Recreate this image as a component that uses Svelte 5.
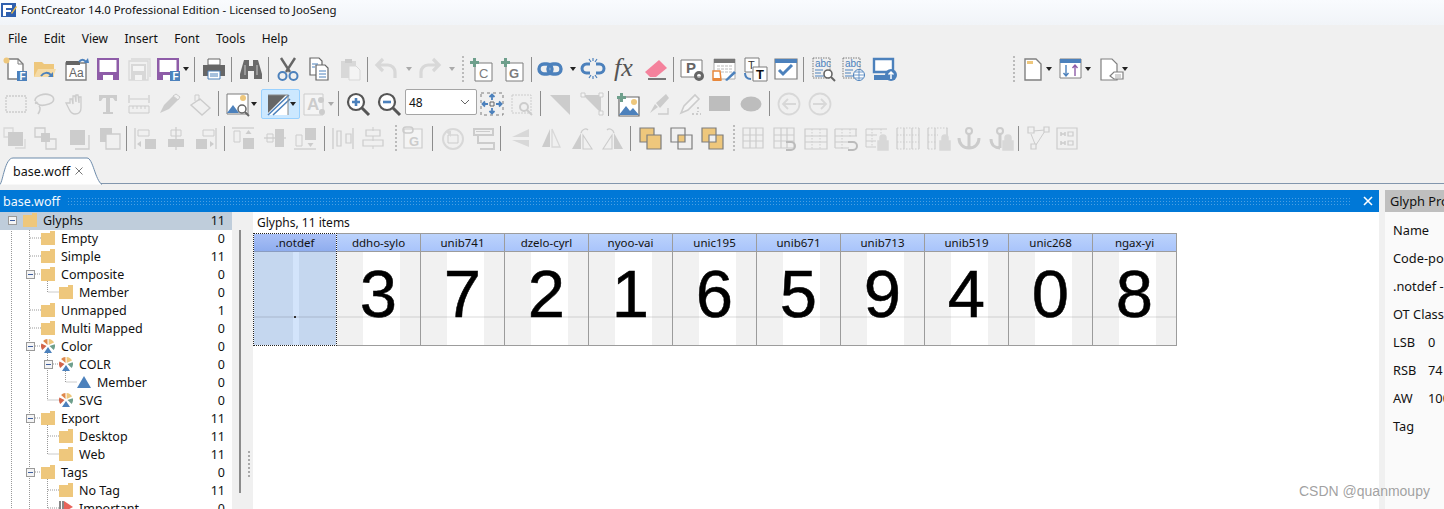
<script lang="ts">
  const g = '#cccccc', b = '#4c81bc', d = '#7d7d7d', p = '#8e5ca8', y = '#eec77c', m = '#6e9f8c', lg = '#d8d8d8';
  const label = (x, yy, t, c = d, s = 11, w = 700, f = 'Liberation Sans') =>
    `<text x="${x}" y="${yy}" fill="${c}" font-size="${s}" font-weight="${w}" font-family="${f}">${t}</text>`;
  const sheet = (c = d, f = '#fff') => `<path d="M5 2h10l5 5v15H5z" fill="${f}" stroke="${c}" stroke-width="1.4"/><path d="M15 2v5h5" fill="none" stroke="${c}"/>`;
  const floppy = (c) => `<path d="M1 1h22v22H1z" fill="${c}"/><path d="M3.500 3h17v12h-17z" fill="#fff"/><path d="M7 18h10v5H7z" fill="#fff"/>`;
  const fTag = `<rect x="14" y="14" width="10" height="10" fill="${b}"/>` + label(16.5, 23, 'F', '#fff', 10);
  const plus = `<path d="M4 1h3v3h3v3H7v3H4V7H1V4h3z" fill="${m}"/>`;
  const lock = `<path d="M13 24V15h10v9zM15 15v-3a3 3 0 0 1 6 0v3" fill="${lg}" stroke="${lg}" stroke-width="1.5"/>`;
  const grid = (c = g, dash = '') => `<path d="M2 2h20v20H2zM9 2v20M15 2v20M2 9h20M2 15h20" fill="none" stroke="${c}" stroke-width="1.2" stroke-dasharray="${dash}"/>`;
  const hook = `<path d="M14 16h5a4 4 0 0 1 0 8h-5" fill="none" stroke="#bbb" stroke-width="2"/>`;
  const abc = label(4, 10, 'abc', b, 10, 400) + `<path d="M2 1h17v20H2z" fill="none" stroke="${d}" stroke-dasharray="1.5 1"/><path d="M4 13h8M4 16h6M4 19h10" stroke="${b}"/>`;
  const icons = {
    newfont: sheet() + `<circle cx="3.5" cy="3.5" r="3" fill="${y}"/>` + fTag,
    open: `<path d="M1 20V5h8l2 2h10v13z" fill="${y}"/><path d="M1 20l4-8h18l-3 8z" fill="#f5dba6"/><path d="M8 19c3-4 7-4 10-1" fill="none" stroke="${b}" stroke-width="2"/><path d="M15 20l5 0 0-5z" fill="${b}"/>`,
    aa: `<path d="M1 6h20v17H1z" fill="#fff" stroke="${d}" stroke-width="1.4"/><path d="M1 4h14v4H1z" fill="#666"/>` + label(4, 20, 'Aa', '#666', 12, 400) + `<path d="M14 5c2-3 5-3 7 0" fill="none" stroke="${b}" stroke-width="2"/><path d="M19 6h5l-1-5z" fill="${b}"/>`,
    save: floppy(p),
    saveall: `<path d="M4 2h19v18M2 4h19v19H2z" fill="none" stroke="${lg}" stroke-width="1.3"/><path d="M4 7h15v16H4z" fill="${lg}"/><path d="M6 9h11v5H6zM8 18h7v5H8z" fill="#f4f4f4"/>`,
    saveas: floppy(p) + fTag,
    print: `<path d="M6 2h12v6H6z" fill="#fff" stroke="#666"/><path d="M1 8h22v11H1z" fill="#666"/><path d="M6 14h12v8H6z" fill="#fff" stroke="${b}"/><path d="M8 17h8M8 19h8" stroke="${b}"/>`,
    binoc: `<path d="M5 3h5v6h4V3h5l4 14v5h-8v-8h-6v8H1v-5z" fill="#6a6a6a"/><path d="M6 8v10M18 8v10" stroke="#c8c8c8"/>`,
    cut: `<path d="M5 1l9 14M19 1L10 15" stroke="#666" stroke-width="2.4"/><circle cx="6.5" cy="19" r="4" fill="none" stroke="${b}" stroke-width="2"/><circle cx="17.5" cy="19" r="4" fill="none" stroke="${b}" stroke-width="2"/>`,
    copy: `<path d="M3 1h9l3 3v14H3z" fill="#fff" stroke="#666" stroke-width="1.2"/><path d="M9 8h9l3 3v12H9z" fill="#fff" stroke="#666" stroke-width="1.2"/><path d="M5 7h6M5 10h3M12 14h7M12 17h7M12 20h7" stroke="${b}"/>`,
    paste: `<path d="M3 4h15v17H3z" fill="${lg}"/><path d="M7 2h7v4H7z" fill="${g}"/><path d="M11 9h7l4 4v10H11z" fill="#f4f4f4" stroke="${lg}"/>`,
    undo: `<path d="M8 2L2 8l6 6M3 8h10a7 7 0 0 1 7 7v6" fill="none" stroke="${lg}" stroke-width="3.200"/>`,
    redo: `<path d="M16 2l6 6-6 6M21 8H11a7 7 0 0 0-7 7v6" fill="none" stroke="${lg}" stroke-width="3.200"/>`,
    addc: `<path d="M6 6h17v18H6z" fill="#fff" stroke="${d}"/>` + label(10, 21, 'C', d, 13, 400) + plus,
    addg: `<path d="M6 6h17v18H6z" fill="#fff" stroke="${d}"/>` + label(9, 21, 'G', d, 13, 700) + plus,
    link: `<rect x="1" y="7" width="13" height="10" rx="5" fill="none" stroke="${b}" stroke-width="3.400"/><rect x="10" y="7" width="13" height="10" rx="5" fill="none" stroke="${b}" stroke-width="3.400"/>`,
    unlink: `<path d="M9 7H5.500a4.500 4.500 0 0 0 0 9H9M15 7h3.500a4.500 4.500 0 0 1 0 9H15" fill="none" stroke="${b}" stroke-width="3"/><path d="M8 2l2 3M16 2l-2 3M12 1v3M8 21l2-3M16 21l-2-3M12 22v-3" stroke="${b}" stroke-width="1.2"/>`,
    fx: label(1, 19, 'fx', '#555', 26, 400, 'Liberation Serif').replace('<text', '<text font-style="italic"'),
    eraser: `<path d="M1 15L15 3l8 8-11 9H6z" fill="#f4829c"/><path d="M4 22h18" stroke="#777" stroke-width="2"/>`,
    prop: `<path d="M1 3h21v17H1z" fill="#fff" stroke="${d}"/>` + label(6, 16, 'P', '#666', 15) + `<circle cx="19" cy="19" r="3.500" fill="none" stroke="#666" stroke-width="3"/>`,
    tedit: `<path d="M2 2h21v20H2z" fill="#fff" stroke="#aaa"/><path d="M2 2h21v4H2z" fill="#777"/><path d="M5 9h16M5 12h16M5 15h16" stroke="#bbb" stroke-dasharray="3 1"/><path d="M1 14h7l1 9H1z" fill="#fff" stroke="#e8883c" stroke-width="1.5"/><path d="M1 21h8v3H1z" fill="#e8883c"/><path d="M13 23l9-9 2 2-9 8z" fill="${b}"/>`,
    tt: `<path d="M2 1h14v14H2z" fill="#fff" stroke="${d}"/>` + label(5, 12, 'T', '#333', 11, 400) + `<path d="M10 10h14v14H10z" fill="#fff" stroke="${d}"/>` + label(13, 22, 'T', '#111', 13) + `<path d="M2 16c0 4 2 6 6 6" fill="none" stroke="${b}" stroke-width="2"/>`,
    check: `<path d="M1 2h22v20H1z" fill="#fff" stroke="${d}" stroke-width="1.2"/><path d="M1 2h22v4H1z" fill="${b}"/><path d="M5 13l4 4 9-9" fill="none" stroke="${b}" stroke-width="3"/>`,
    abcs: abc + `<circle cx="17" cy="17" r="4" fill="#fff" stroke="#666" stroke-width="1.6"/><path d="M20 20l4 4" stroke="#666" stroke-width="2"/>`,
    abcw: abc + `<circle cx="18" cy="18" r="5.500" fill="#fff" stroke="${b}"/><path d="M12.500 18h11M18 12.500v11M14 15h8M14 21h8" stroke="${b}" stroke-width=".8"/>`,
    monitor: `<path d="M1 2h19v13H1z" fill="#fff" stroke="${b}" stroke-width="2.400"/><path d="M1 18h14v5H1z" fill="${b}"/><circle cx="18" cy="18" r="6" fill="${b}"/><path d="M18 22v-7M15.500 17.500l2.500-2.500 2.500 2.500" fill="none" stroke="#fff" stroke-width="1.500"/>`,
    doc: `<path d="M4 2h11l5 5v16H4z" fill="#fff" stroke="#808080" stroke-width="1.400"/><path d="M6 4h6v3H6z" fill="${y}"/>`,
    sort: `<path d="M1 2h21v19H1z" fill="#fff" stroke="#808080"/><path d="M1 2h21v4H1z" fill="${b}"/><path d="M7 8v11M4.500 16l2.500 3 2.500-3" fill="none" stroke="${b}" stroke-width="1.400"/><path d="M16 19V8M13.500 11l2.500-3 2.500 3" fill="none" stroke="${p}" stroke-width="1.400"/>`,
    tagdoc: `<path d="M3 2h11l5 5v16H3z" fill="#fff" stroke="#808080" stroke-width="1.200"/><path d="M12 19l4-4h9v7h-9z" fill="#fff" stroke="#808080" stroke-width="1.200"/><path d="M17 18h6M17 20h6" stroke="#aaa"/>`,

    marquee: `<path d="M2 4h20v16H2z" fill="none" stroke="${g}" stroke-width="1.400" stroke-dasharray="2 1"/>`,
    lasso: `<path d="M2 9c0-6 10-8 15-6s5 7-1 9-9 2-11 0c-2-3-3-2-2 0M6 14c2 2 1 5-1 8" fill="none" stroke="${g}" stroke-width="1.600"/>`,
    hand: `<path d="M5 11V7l2 0 1 5V4h2l1 6V3h2l1 8V5h2v11c0 4-2 6-6 6s-5-3-6-5l-3-6z" fill="#f0f0f0" stroke="${g}" stroke-width="1.300"/>`,
    tee: `<path d="M3 3h18v6h-2l-2-3h-3v14h3v2H7v-2h3V6H7L5 9H3z" fill="${g}"/>`,
    ruler: `<path d="M2 3v8M22 3v8M3 7h18" fill="none" stroke="${g}" stroke-width="1.200"/><path d="M2 14h20v7H2zM6 14v3M10 14v3M14 14v3M18 14v3" fill="none" stroke="${g}"/>`,
    knife: `<path d="M2 21l4-8 9-9 5 4-9 9z" fill="${g}"/><path d="M15 4l3-2 4 3-2 3z" fill="none" stroke="${g}"/>`,
    bucket: `<path d="M11 7l10 9-8 7L2 13z" fill="#f0f0f0" stroke="${g}" stroke-width="1.400"/><path d="M6 9V3h4v6" fill="none" stroke="${g}"/>`,
    imgzoom: `<path d="M1 2h21v20H1z" fill="#fff" stroke="${d}"/><circle cx="17" cy="6" r="3" fill="${y}"/><path d="M1 21l6-8 6 8z" fill="${b}"/><circle cx="16" cy="17" r="4" fill="#fff" stroke="#666" stroke-width="1.500"/><path d="M19 20l4 4" stroke="#666" stroke-width="2"/>`,
    split: `<path d="M2 3h20v20H2z" fill="#fff"/><path d="M2 3h18L2 21z" fill="#666"/><path d="M2 23L23 3M7 23L24 7" stroke="${b}" stroke-width="1.600"/><path d="M2 3h20v20" fill="none" stroke="#888"/>`,
    acolor: `<path d="M1 2h19v21H1z" fill="#f4f4f4" stroke="${g}"/>` + label(4, 18, 'A', g, 17) + `<circle cx="18" cy="8" r="3" fill="${g}"/><circle cx="19" cy="20" r="3" fill="${g}"/>`,
    zoomin: `<circle cx="10" cy="10" r="8" fill="#fff" stroke="#555" stroke-width="2.200"/><path d="M16 16l7 7" stroke="#555" stroke-width="3"/><path d="M6 10h8M10 6v8" stroke="${b}" stroke-width="2.600"/>`,
    zoomout: `<circle cx="10" cy="10" r="8" fill="#fff" stroke="#555" stroke-width="2.200"/><path d="M16 16l7 7" stroke="#555" stroke-width="3"/><path d="M6 10h8" stroke="${b}" stroke-width="2.600"/>`,
    fit: `<path d="M1 1h22v22H1z" fill="none" stroke="${d}" stroke-dasharray="3 3"/><path d="M10 10h4v4h-4z" fill="none" stroke="#666"/><path d="M12 8V3M9.500 5L12 2.500 14.500 5M12 16v5M9.500 19l2.500 2.500 2.500-2.500M8 12H3M5 9.500L2.500 12 5 14.500M16 12h5M19 9.500l2.500 2.500-2.500 2.500" fill="none" stroke="${b}" stroke-width="1.800"/>`,
    zoomsel: `<path d="M2 3h19v18H2z" fill="none" stroke="${g}" stroke-dasharray="2 1"/><circle cx="14" cy="15" r="4" fill="#f0f0f0" stroke="${g}" stroke-width="2"/><path d="M17 18l5 5" stroke="${g}" stroke-width="2"/>`,
    tri: `<path d="M2 3h20v20z" fill="${g}"/>`,
    trin: `<path d="M3 3h18v18z" fill="${g}"/><path d="M1 1h4v4H1zM19 1h4v4h-4zM19 19h4v4h-4z" fill="#f4f4f4" stroke="${g}"/>`,
    addimg: `<path d="M3 5h20v19H3z" fill="#fff" stroke="#666" stroke-width="1.200"/><circle cx="18" cy="10" r="3" fill="${y}"/><path d="M3 23l7-9 4 5 3-3 6 7z" fill="${b}"/>` + plus,
    brush: `<path d="M3 21l5-9 3 3zM9 11l10-9 3 4-9 10z" fill="${g}"/><path d="M11 22h10v-6" fill="none" stroke="${g}" stroke-width="1.400"/>`,
    pen: `<path d="M3 21l3-7L17 3l4 4-11 11z" fill="#f4f4f4" stroke="${g}" stroke-width="1.600"/><path d="M14 22h9M20 15v5" stroke="${g}" stroke-width="2" stroke-dasharray="2 2"/>`,
    rect: `<path d="M1 4h21v15H1z" fill="#bdbdbd"/>`,
    ellipse: `<ellipse cx="12" cy="12" rx="10.500" ry="7.500" fill="#bdbdbd"/>`,
    back: `<circle cx="12" cy="12" r="10.500" fill="none" stroke="${lg}" stroke-width="1.800"/><path d="M19 12H6M11 7l-5 5 5 5" fill="none" stroke="${lg}" stroke-width="1.800"/>`,
    fwd: `<circle cx="12" cy="12" r="10.500" fill="none" stroke="${lg}" stroke-width="1.800"/><path d="M5 12h13M13 7l5 5-5 5" fill="none" stroke="${lg}" stroke-width="1.800"/>`,

    front: `<path d="M1 2h9v9H1z" fill="none" stroke="${lg}" stroke-width="1.300"/><path d="M5 6h15v14H5z" fill="${g}"/><path d="M12 22h10v-9" fill="none" stroke="${lg}" stroke-width="1.300"/>`,
    fwd2: `<path d="M2 2h10v9H2zM13 13h10v10H13z" fill="none" stroke="${g}" stroke-width="1.300"/><path d="M8 7h9v9H8z" fill="${g}"/>`,
    backw: `<path d="M3 4h15v15H3z" fill="${g}"/><path d="M8 23h14V9" fill="none" stroke="${g}" stroke-width="1.300"/>`,
    back2: `<path d="M2 2h12v14H2z" fill="${g}"/><path d="M8 8h14v15H8z" fill="#f0f0f0" stroke="${g}" stroke-width="1.300"/>`,
    al1: `<path d="M2 2v21" stroke="${g}" stroke-width="1.300"/><path d="M5 4h11v6H5z" fill="none" stroke="${g}"/><path d="M12 13h11v10H12z" fill="${g}"/><path d="M4 18l4-3v6z" fill="${g}"/>`,
    al2: `<path d="M12 1v23" stroke="${g}" stroke-width="1.300"/><path d="M7 4h10v6H7z" fill="none" stroke="${g}"/><path d="M4 13h16v8H4z" fill="${g}"/>`,
    al3: `<path d="M22 2v21" stroke="${g}" stroke-width="1.300"/><path d="M9 4h11v6H9z" fill="none" stroke="${g}"/><path d="M2 13h11v10H2z" fill="${g}"/><path d="M20 18l-4-3v6z" fill="${g}"/>`,
    at1: `<path d="M1 2h22" stroke="${g}" stroke-width="1.300"/><path d="M3 5h6v11H3z" fill="none" stroke="${g}"/><path d="M12 12h11v11H12z" fill="${g}"/><path d="M17.500 4l-3 4h6z" fill="${g}"/>`,
    at2: `<path d="M1 12h22" stroke="${g}" stroke-width="1.300"/><path d="M4 8h6v8H4z" fill="none" stroke="${g}"/><path d="M12 3h9v18h-9z" fill="${g}"/>`,
    at3: `<path d="M1 23h22" stroke="${g}" stroke-width="1.300"/><path d="M3 9h6v11H3z" fill="none" stroke="${g}"/><path d="M12 2h11v12H12z" fill="${g}"/><path d="M17.500 21l-3-4h6z" fill="${g}"/>`,
    dist1: `<path d="M2 2v21M22 2v21" stroke="${g}" stroke-width="1.300"/><path d="M6 5h4v15H6zM15 8h5v9h-5z" fill="none" stroke="${g}" stroke-width="1.200"/>`,
    dist2: `<path d="M12 1v4M12 10v5M12 20v3" stroke="${g}"/><path d="M5 4h14v6H5zM2 14h20v6H2z" fill="none" stroke="${g}" stroke-width="1.200"/>`,
    linkg: `<path d="M3 3h18v19H3z" fill="#f4f4f4" stroke="${g}" stroke-width="1.200"/>` + label(8, 20, 'G', g, 13) + `<rect x="2" y="1" width="10" height="6" rx="3" fill="none" stroke="${g}" stroke-width="1.600"/>`,
    rot: `<circle cx="12" cy="13" r="10" fill="none" stroke="${lg}" stroke-width="2"/><path d="M7 9h10v8H7z" fill="#f0f0f0" stroke="${g}"/><path d="M4 5h6v6z" fill="${lg}"/>`,
    rot2: `<path d="M1 3h19v6H1zM5 9v8h16v6H7" fill="none" stroke="${g}" stroke-width="2"/><path d="M3 6h14v-1H3z" fill="${g}"/>`,
    fl1: `<path d="M22 3L5 11h17zM22 14H5l17 7z" fill="${lg}"/>`,
    fl2: `<path d="M11 3v18H3z" fill="${g}"/><path d="M13 3v18h8z" fill="none" stroke="${lg}" stroke-width="1.300"/>`,
    fl3: `<path d="M11 7v16H2z" fill="${g}"/><path d="M13 9v14h9z" fill="none" stroke="${g}" stroke-width="1.100"/><path d="M11 7c1-4 5-5 7-3" fill="none" stroke="${g}" stroke-width="1.300"/>`,
    fl4: `<path d="M11 9v14H2z" fill="none" stroke="${g}" stroke-width="1.100"/><path d="M13 7v16h9z" fill="${g}"/><path d="M13 7c-1-4-5-5-7-3" fill="none" stroke="${g}" stroke-width="1.300"/>`,
    bool1: `<path d="M2 2h14v14H2z" fill="${y}" stroke="${d}" stroke-width="1.200"/><path d="M9 9h14v14H9z" fill="${y}" stroke="${d}" stroke-width="1.200"/>`,
    bool2: `<path d="M9 9h7v7H9z" fill="${y}"/><path d="M2 2h14v14H2zM9 9h14v14H9z" fill="none" stroke="${d}" stroke-width="1.200"/>`,
    bool3: `<path d="M2 2h14v7H9v7H2zM16 9h7v14H9v-7h7z" fill="${y}"/><path d="M2 2h14v14H2zM9 9h14v14H9z" fill="none" stroke="${d}" stroke-width="1.200"/>`,
    grid: grid(),
    gridh: grid() + hook,
    grid2: `<path d="M1 3h22v20H1zM1 10h22M1 16h22" fill="none" stroke="${g}" stroke-width="1.200"/><path d="M8 3v20M16 3v20" stroke="${g}" stroke-dasharray="1.500 1.500"/>`,
    grid2h: `<path d="M1 3h22M1 10h22M1 16h14M1 22h14M1 3v19M22 3v7" fill="none" stroke="${g}" stroke-width="1.200"/><path d="M8 3v20M16 3v8" stroke="${g}" stroke-dasharray="1.500 1.500"/>` + hook,
    gridl: `<path d="M1 3h21M1 9h11M1 15h10M1 21h10M1 3v18" fill="none" stroke="${g}"/><path d="M7 3v18M16 3v6" stroke="${g}" stroke-dasharray="1.500 1.500"/>` + lock,
    gridv: `<path d="M1 2v21M8 2v21M16 2v21M23 2v21" fill="none" stroke="${g}" stroke-width="1.200"/><path d="M1 9h22M1 16h22M1 2h22M1 23h22" stroke="${g}" stroke-dasharray="1.500 1.500"/>`,
    gridvl: `<path d="M1 2v21M8 2v21M20 2v8" fill="none" stroke="${g}" stroke-width="1.200"/><path d="M1 2h21M1 9h10M1 16h9M1 23h9" stroke="${g}" stroke-dasharray="1.500 1.500"/>` + lock,
    anchor: `<circle cx="12" cy="5" r="3" fill="none" stroke="${g}" stroke-width="2"/><path d="M12 8v14M2 12c0 6 4 10 10 10s10-4 10-10" fill="none" stroke="${g}" stroke-width="3"/>`,
    anchorl: `<circle cx="10" cy="5" r="3" fill="none" stroke="${g}" stroke-width="2"/><path d="M10 8v14M1 13c0 6 4 9 9 9" fill="none" stroke="${g}" stroke-width="3"/>` + lock,
    nodes: `<path d="M5 8l4 10M7 5l12-1M10 19l9-14" stroke="${g}"/><path d="M2 1h6v6H2zM18 1h5v5h-5zM5 18h5v5H5z" fill="#f0f0f0" stroke="${g}" stroke-width="1.200"/>`,
    kern: `<path d="M1 2h20v21H1z" fill="none" stroke="${g}" stroke-width="1.200"/><path d="M5 6v4M9 6v4M5 8h4M5 15v4M9 15v4M5 17h4" stroke="${g}" stroke-width="1.500"/><path d="M12 6h5v4h-5zM12 15h5v4h-5z" fill="none" stroke="${g}" stroke-width="1.200"/>`,
  };

  // toolbar rows: [center x, kind or icon name]
  const row1 = [[15,'newfont'],[45,'open'],[77,'aa'],[108,'save'],[139,'saveall'],[168,'saveas'],[186,'^'],[196,'|'],[215,'print'],[233,'|'],[252,'binoc'],[270,'|'],[289,'cut'],[320,'copy'],[351,'paste'],[369,'|'],[388,'undo'],[410,'~'],[431,'redo'],[454,'~'],[466,':'],[484,'addc'],[515,'addg'],[535,'|'],[553,'link'],[576,'^'],[597,'unlink'],[629,'fx'],[660,'eraser'],[678,'|'],[696,'prop'],[728,'tedit'],[759,'tt'],[790,'check'],[808,'|'],[827,'abcs'],[857,'abcw'],[889,'monitor'],[1018,':'],[1037,'doc'],[1053,'^'],[1076,'sort'],[1093,'^'],[1116,'tagdoc'],[1131,'^']];
  const row2 = [[16,'marquee'],[45,'lasso'],[77,'hand'],[108,'tee'],[139,'ruler'],[170,'knife'],[201,'bucket'],[219,'|'],[238,'imgzoom'],[254,'^'],[279,'split*'],[294,'^'],[317,'acolor'],[333,'~'],[342,'|'],[361,'zoomin'],[392,'zoomout'],[444,'select'],[495,'fit'],[525,'zoomsel'],[544,'|'],[563,'tri'],[595,'trin'],[612,'|'],[631,'addimg'],[662,'brush'],[693,'pen'],[723,'rect'],[754,'ellipse'],[773,'|'],[792,'back'],[823,'fwd']];
  const row3 = [[15,'front'],[45,'fwd2'],[79,'backw'],[110,'back2'],[127,'|'],[145,'al1'],[176,'al2'],[206,'al3'],[225,'|'],[243,'at1'],[275,'at2'],[305,'at3'],[325,'|'],[343,'dist1'],[373,'dist2'],[396,':'],[413,'linkg'],[433,'|'],[453,'rot'],[485,'rot2'],[501,'|'],[519,'fl1'],[551,'fl2'],[582,'fl3'],[613,'fl4'],[631,'|'],[650,'bool1'],[681,'bool2'],[712,'bool3'],[734,':'],[753,'grid'],[784,'gridh'],[816,'grid2'],[846,'grid2h'],[877,'gridl'],[908,'gridv'],[939,'gridvl'],[969,'anchor'],[1002,'anchorl'],[1019,'|'],[1038,'nodes'],[1068,'kern']];

  const widthOf = (k) => (k === '|' || k === ':' ? 2 : k === '^' || k === '~' ? 7 : k === 'select' ? 72 : 24);
  // turn centers into flow margins
  const layout = (row) => {
    let right = 0;
    return row.map(([c, k]) => {
      const w = widthOf(k);
      const left = c - w / 2;
      const gap = left - right;
      right = left + w;
      return { k, gap };
    });
  };
  const rows = [layout(row1), layout(row2), layout(row3)];

  const tree = [
    ['Glyphs', 11, 0, 'folder', true], ['Empty', 0, 1, 'folder'], ['Simple', 11, 1, 'folder'], ['Composite', 0, 1, 'folder', true],
    ['Member', 0, 2, 'folder'], ['Unmapped', 1, 1, 'folder'], ['Multi Mapped', 0, 1, 'folder'], ['Color', 0, 1, 'pie', true],
    ['COLR', 0, 2, 'pie', true], ['Member', 0, 3, 'tri'], ['SVG', 0, 2, 'pie'], ['Export', 11, 1, 'folder', true],
    ['Desktop', 11, 2, 'folder'], ['Web', 11, 2, 'folder'], ['Tags', 0, 1, 'folder', true], ['No Tag', 11, 2, 'folder'], ['Important', 0, 2, 'flag'],
  ];
  const glyphs = [['ddho-sylo',3],['unib741',7],['dzelo-cyrl',2],['nyoo-vai',1],['unic195',6],['unib671',5],['unib713',9],['unib519',4],['unic268',0],['ngax-yi',8]];
  const props = [['Name',''],['Code-point',''],['.notdef - ',''],['OT Class',''],['LSB','0'],['RSB','74'],['AW','1000'],['Tag','']];
  // dotted tree guides, in tree coordinates
  const guides = 'M11.500 13V297M29.500 18V297M16 8H23M30 26H41M30 44H41M35 62H41M47.500 67V80H59M30 98H41M30 116H41M35 134H41M47.500 141V148M47.500 156V188H59M53 152H59M65.500 159V170H77M35 206H41M47.500 213V242H59M48 224H59M35 260H41M47.500 267V297M48 278H59M48 296H59';
</script>

<div class="app">
  <div class="title">
    <svg class="logo" viewBox="0 0 16 16" width="16" height="16"><path d="M0 1h15v14H0z" fill="#2f5fae"/><path d="M2 3h9v3H5v2h5v2H5v4H2z" fill="#fff"/><path d="M10 11l5-7 1 1-5 7z" fill="#e8b84a"/></svg>
    <span>FontCreator 14.0 Professional Edition - Licensed to JooSeng</span>
  </div>
  <nav class="menu">
    {#each ['File','Edit','View','Insert','Font','Tools','Help'] as item}<span>{item}</span>{/each}
  </nav>

  <div class="toolbars">
    {#each rows as row}
      <div class="tb">
        {#each row as it}
          {#if it.k === '|'}
            <i class="sep" style:margin-left="{it.gap}px"></i>
          {:else if it.k === ':'}
            <i class="grip" style:margin-left="{it.gap}px"></i>
          {:else if it.k === '^' || it.k === '~'}
            <i class="caret" class:off={it.k === '~'} style:margin-left="{it.gap}px"></i>
          {:else if it.k === 'select'}
            <div class="select" style:margin-left="{it.gap}px">
              <span>48</span>
              <svg width="10" height="6" viewBox="0 0 10 6"><path d="M1 1l4 4 4-4" fill="none" stroke="#666"/></svg>
            </div>
          {:else}
            <div class="ic" class:on={it.k.endsWith('*')} style:margin-left="{it.gap}px">
              <svg width="24" height="24" viewBox="0 0 24 24">{@html icons[it.k.replace('*', '')]}</svg>
            </div>
          {/if}
        {/each}
      </div>
    {/each}
  </div>

  <div class="tabs">
    <div class="tab">
      <svg class="tab-shape" width="104" height="28" viewBox="0 0 104 28"><path d="M0 27.500C3 24 5 1 13 1h74c6 0 8 22 15 26.500" fill="#fff" stroke="#6d8bab"/></svg>
      <span class="tab-name">base.woff</span>
      <svg class="tab-x" width="8" height="8" viewBox="0 0 8 8"><path d="M.5.500l7 7M7.500.500l-7 7" stroke="#777"/></svg>
    </div>
  </div>

  <div class="workspace">
    <div class="doc">
      <div class="doc-head">
        <span>base.woff</span>
        <i class="dots"></i>
        <svg width="10" height="10" viewBox="0 0 10 10"><path d="M1 1l8 8M9 1l-8 8" stroke="#fff" stroke-width="1.600"/></svg>
      </div>
      <div class="doc-body">
        <div class="tree">
          <svg class="guides" width="100" height="297"><path d={guides} fill="none" stroke="#999" stroke-dasharray="1 1"/></svg>
          {#each tree as [name, count, level, icon, open], i}
            <div class="node" class:sel={i === 0} style:padding-left="{23 + level * 18}px">
              {#if open}
                <i class="exp"></i>
              {/if}
              {#if icon === 'folder'}
                <svg width="14" height="14" viewBox="0 0 14 14"><path d="M0 2h9V0h5v14H0z" fill="#eec77c"/></svg>
              {:else if icon === 'pie'}
                <svg width="14" height="14" viewBox="0 0 14 14"><path d="M6.600 6L2.050 2.050A7 7 0 0 1 6.400.030z" fill="#e0884a"/><path d="M7.600 6V.030A7 7 0 0 1 13.060 3.500z" fill="#eec77c"/><path d="M8.500 7l5.260-1.800A7 7 0 0 1 12.700 11z" fill="#6e9f8c"/><path d="M5.500 7L1.270 11A7 7 0 0 1 .420 4.600z" fill="#d2644a"/><path d="M7 8l4 6H3z" fill="#4c81bc"/></svg>
              {:else if icon === 'tri'}
                <svg width="14" height="14" viewBox="0 0 14 14"><path d="M7 1l7 12H0z" fill="#4c81bc"/></svg>
              {:else}
                <svg width="14" height="14" viewBox="0 0 14 14"><path d="M0 0h2v14H0zM3 0h2v14H3z" fill="#888"/><path d="M5 0l9 6-9 5z" fill="#e8635a"/></svg>
              {/if}
              <span class="name">{name}</span>
              <span class="count">{count}</span>
            </div>
          {/each}
        </div>
        <div class="splitter"><i class="vbar"></i><i class="vgrip"></i></div>
        <div class="list">
          <div class="caption">Glyphs, 11 items</div>
          <div class="cells">
            <div class="cell picked">
              <div class="cell-name">.notdef</div>
              <div class="glyph"><i class="dot"></i></div>
            </div>
            {#each glyphs as [name, digit]}
              <div class="cell">
                <div class="cell-name">{name}</div>
                <div class="glyph">{digit}</div>
              </div>
            {/each}
          </div>
        </div>
      </div>
    </div>
    <aside class="props">
      <div class="props-head">Glyph Properties</div>
      <div class="props-body">
        {#each props as [k, v]}
          <div class="prop"><span class="k">{k}</span><span>{v}</span></div>
        {/each}
      </div>
    </aside>
  </div>
  <div class="mark">CSDN @quanmoupy</div>
</div>

<style>
  :global(body) { margin: 0; background: #f0f0f0; }
  .app {
    position: relative;
    width: 1444px;
    height: 509px;
    overflow: hidden;
    display: flex;
    flex-direction: column;
    background: #f0f0f0;
    font-family: "Noto Sans", sans-serif;
    font-size: 12px;
    color: #111;
  }
  .title {
    height: 25px;
    display: flex;
    align-items: center;
    gap: 4px;
    padding: 0 0 6px 1px;
    box-sizing: border-box;
    font-size: 11.400px;
    background: linear-gradient(#f9fbfe, #f1f4f8);
    flex-shrink: 0;
  }
  .logo { flex-shrink: 0; }
  .menu {
    height: 27px;
    display: flex;
    align-items: center;
    gap: 16.500px;
    padding-left: 8px;
    flex-shrink: 0;
  }
  .toolbars {
    height: 103px;
    display: grid;
    grid-template-rows: 34px 35px 34px;
    flex-shrink: 0;
  }
  .tb { display: flex; align-items: center; }
  .ic { position: relative; width: 24px; height: 24px; flex-shrink: 0; }
  .ic svg { position: relative; display: block; overflow: visible; }
  .ic.on::before {
    content: '';
    position: absolute;
    left: -5px;
    top: -3px;
    width: 37px;
    height: 28px;
    background: #cce8ff;
    border: 1px solid #99d1ff;
    border-radius: 2px;
  }
  .sep { width: 1px; margin-right: 1px; height: 25px; background: #8c8c8c; flex-shrink: 0; }
  .grip { width: 2px; height: 26px; flex-shrink: 0; background: repeating-linear-gradient(#bbb 0 2px, transparent 2px 4px); }
  .caret { position: relative; width: 0; height: 0; flex-shrink: 0; border: 3.500px solid transparent; border-top: 4px solid #222; border-bottom: 0; }
  .caret.off { border-top-color: #aaa; }
  .select {
    width: 72px;
    height: 26px;
    margin-bottom: 3px;
    box-sizing: border-box;
    display: flex;
    align-items: center;
    justify-content: space-between;
    padding: 0 6px 0 3px;
    background: #fff;
    border: 1px solid #a5a5a5;
    border-radius: 2px;
    flex-shrink: 0;
  }
  .tabs {
    height: 29px;
    box-sizing: border-box;
    border-bottom: 1px solid #8296ad;
    flex-shrink: 0;
    display: flex;
    align-items: flex-end;
  }
  .tab {
    position: relative;
    width: 102px;
    height: 26px;
    display: flex;
    align-items: center;
    gap: 5px;
    padding-left: 13px;
    box-sizing: border-box;
    margin-bottom: -1px;
  }
  .tab-shape { position: absolute; left: 0; top: -1px; }
  .tab-name, .tab-x { position: relative; }
  .tab-name { font-size: 12.500px; }
  .workspace { flex: 1; min-height: 0; display: flex; padding-top: 6px; }
  .doc { width: 1379px; display: flex; flex-direction: column; flex-shrink: 0; }
  .doc-head {
    height: 22px;
    flex-shrink: 0;
    display: flex;
    align-items: center;
    gap: 7px;
    padding: 0 6px 0 3px;
    background: #0078d7;
    color: #f4f9fd;
    font-size: 12.500px;
  }
  .dots {
    flex: 1;
    height: 8px;
    margin-right: 4px;
    background-image: radial-gradient(#4a9fe3 .6px, transparent .7px);
    background-size: 3px 3px;
  }
  .doc-body { flex: 1; min-height: 0; display: flex; background: #fff; }
  .tree { position: relative; width: 232px; flex-shrink: 0; overflow: hidden; font-size: 12.500px; }
  .guides { position: absolute; left: 0; top: 0; }
  .node {
    position: relative;
    height: 18px;
    box-sizing: border-box;
    display: flex;
    align-items: center;
    gap: 6px;
    padding-right: 7px;
    padding-bottom: 2px;
  }
  .node.sel { background: #bfcddb; }
  .node svg { flex-shrink: 0; }
  .exp {
    position: absolute;
    width: 7px;
    height: 7px;
    margin-left: -15px;
    border: 1px solid #999;
    background: linear-gradient(#3f5f9f, #3f5f9f) center / 5px 1px no-repeat, #f4f4f4;
  }
  .name { flex: 1; white-space: nowrap; }
  .splitter { position: relative; width: 21px; background: #f0f0f0; flex-shrink: 0; }
  .vbar { position: absolute; left: 7px; top: 18px; width: 2px; height: 263px; background: #8c8c8c; }
  .vgrip { position: absolute; left: 16px; top: 239px; width: 2px; height: 26px; background: repeating-linear-gradient(#aaa 0 2px, transparent 2px 4px); }
  .list { flex: 1; min-width: 0; }
  .caption { height: 21px; line-height: 21px; padding-left: 4px; }
  .cells { display: flex; align-items: flex-start; }
  .cell {
    width: 84px;
    box-sizing: border-box;
    border: 1px solid #9c9c9c;
    border-left-width: 0;
    flex-shrink: 0;
  }
  .cell:first-child { border-left-width: 1px; }
  .cell-name {
    height: 18px;
    line-height: 17px;
    text-align: center;
    font-size: 11.500px;
    background: linear-gradient(#bcd3fc, #a9c4fb);
    border-bottom: 1px solid #9c9c9c;
    box-sizing: border-box;
  }
  .glyph {
    position: relative;
    height: 93px;
    box-sizing: border-box;
    padding-top: 9px;
    text-align: center;
    font-family: "Liberation Sans", sans-serif;
    font-size: 67px;
    line-height: 65px;
    color: #000;
    -webkit-text-stroke: .5px #000;
    background: linear-gradient(90deg, #f1f1f1 26px, #fff 26px 63px, #f1f1f1 63px);
  }
  .glyph::after {
    content: '';
    position: absolute;
    left: 0;
    right: 0;
    top: 64px;
    height: 2px;
    background: rgba(0, 0, 0, .07);
  }
  .picked { border: 1px dotted #222; }
  .picked .cell-name { background: linear-gradient(#a9c0f6, #8fadee); border-bottom-color: #8a9cc0; }
  .picked .glyph { background: linear-gradient(90deg, #c5d7ef 39px, #d3e4fb 39px 45px, #c5d7ef 45px); }
  .dot { position: absolute; left: 40px; top: 64px; width: 2px; height: 2px; background: #333; z-index: 1; }
  .props { flex: 1; min-width: 0; margin-left: 6px; display: flex; flex-direction: column; overflow: hidden; font-size: 12.800px; }
  .props-head { height: 22px; line-height: 22px; padding-left: 5px; background: #bfbfbf; white-space: nowrap; flex-shrink: 0; }
  .props-body { flex: 1; background: #fafafa; padding: 4px 0 0 8px; }
  .prop { height: 28px; display: flex; align-items: center; white-space: nowrap; }
  .k { width: 35px; flex-shrink: 0; }
  .mark {
    position: absolute;
    left: 1299px;
    top: 483px;
    font-family: "Liberation Sans", sans-serif;
    font-size: 14px;
    color: rgba(130, 130, 130, .75);
  }
</style>
